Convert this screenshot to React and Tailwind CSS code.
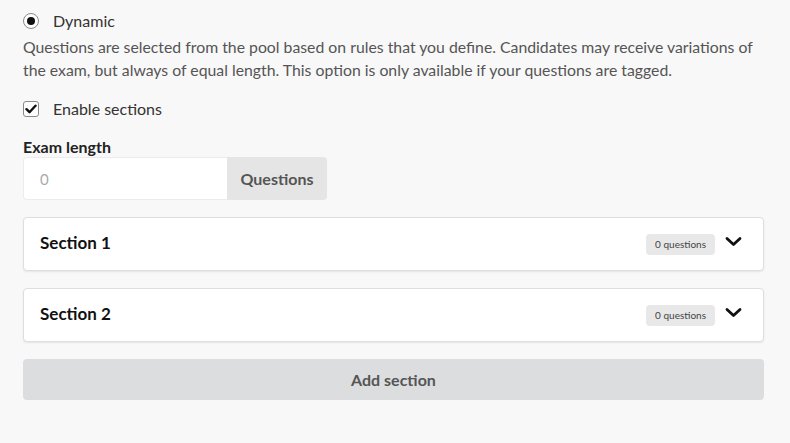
import { useState } from 'react'

const SECTIONS = ['Section 1', 'Section 2']

function Chevron() {
  return (
    <svg width="17" height="11" viewBox="0 0 17 11" fill="none">
      <path d="M2 2.5l6.5 6 6.5-6" stroke="#111" strokeWidth="2.8" strokeLinecap="round" strokeLinejoin="round" />
    </svg>
  )
}

export default function App() {
  const [sections] = useState(SECTIONS)

  return (
    <div className="min-h-[443px] w-[790px] bg-[#f8f8f8] text-[#4a4a4a] font-['Lato','Liberation_Sans',sans-serif] px-[23px] pt-[11px]">
      <label className="flex items-center h-[20px]">
        <span className="w-[16px] h-[16px] rounded-full border border-[#8a8a8a] bg-white flex items-center justify-center">
          <span className="w-[8px] h-[8px] rounded-full bg-[#111]" />
        </span>
        <span className="ml-[14px] text-[16px] text-[#333]">Dynamic</span>
      </label>
      <p className="mt-[4px] text-[15.8px] leading-[23px] text-[#555]">
        Questions are selected from the pool based on rules that you define. Candidates may receive variations of the exam, but always of equal length. This option is only available if your questions are tagged.
      </p>

      <label className="flex items-center h-[20px] mt-[18px]">
        <span className="w-[16px] h-[16px] rounded-[3px] border border-[#8a8a8a] bg-white flex items-center justify-center">
          <svg width="12" height="10" viewBox="0 0 12 10">
            <path d="M1.5 5.2l3 3 6-6.5" stroke="#111" strokeWidth="2.4" fill="none" strokeLinecap="round" strokeLinejoin="round" />
          </svg>
        </span>
        <span className="ml-[14px] text-[16px] text-[#333]">Enable sections</span>
      </label>

      <div className="mt-[18px] text-[16px] font-bold text-[#222] leading-[20px]">Exam length</div>
      <div className="flex w-[304px] h-[43px]">
        <input
          className="w-[204px] h-full bg-white border border-r-0 border-[#ececec] rounded-l-[4px] pl-[16px] text-[15px] text-[#999] outline-none placeholder:text-[#aaa]"
          placeholder="0"
        />
        <div className="flex-1 bg-[#e5e5e5] rounded-r-[4px] flex items-center justify-center text-[16px] font-bold text-[#555]">
          Questions
        </div>
      </div>

      <div className="mt-[17px] flex flex-col gap-[17px] w-[741px]">
        {sections.map((s) => (
          <div key={s} className="h-[54px] bg-white border border-[#dedede] rounded-[4px] shadow-[0_1px_2px_rgba(0,0,0,0.08)] flex items-center pl-[16px] pr-[21px]">
            <span className="text-[17px] font-bold text-[#111] -mt-[3px]">{s}</span>
            <span className="ml-auto h-[21px] px-[9px] rounded-[4px] bg-[#e8e8e8] text-[10px] text-[#444] flex items-center">
              0 questions
            </span>
            <span className="ml-[10px] flex items-center -mt-[5px]">
              <Chevron />
            </span>
          </div>
        ))}
      </div>

      <button className="mt-[17px] w-[741px] h-[41px] rounded-[4px] bg-[#dcdddf] text-[16px] font-bold text-[#555]">
        Add section
      </button>
    </div>
  )
}
